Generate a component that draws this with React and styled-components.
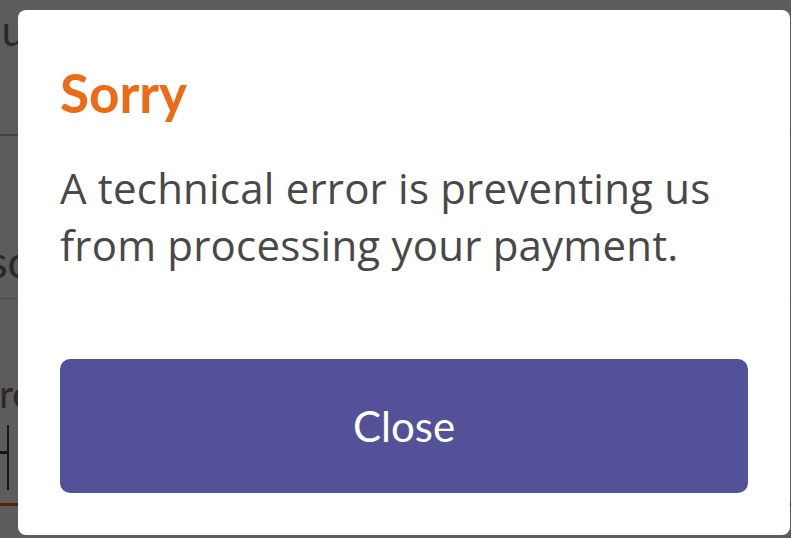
import React from "react";
import styled, { createGlobalStyle } from "styled-components";

const GlobalStyle = createGlobalStyle`
  html, body {
    margin: 0;
    padding: 0;
    overflow: hidden;
  }
  body {
    font-family: Lato, "Noto Sans", sans-serif;
  }
`;

export default function App() {
  return (
    <>
      <GlobalStyle />
      <Screen>
        <Page>
          <PageHeading>Your payment</PageHeading>
          <Rule $thick />
          <FieldText>Description</FieldText>
          <Rule />
          <FieldLabel>Reference</FieldLabel>
          <InputBox>
            <Caret />
          </InputBox>
          <InputUnderline />
        </Page>

        <Overlay />

        <Dialog role="alertdialog" aria-labelledby="dlg-title">
          <Title id="dlg-title">Sorry</Title>
          <Message>
            A technical error is preventing us
            <br />
            from processing your payment.
          </Message>
          <CloseButton type="button">Close</CloseButton>
        </Dialog>
      </Screen>
    </>
  );
}

//STYLED-COMPONENTS
const Screen = styled.div`
  position: relative;
  width: 791px;
  height: 538px;
  overflow: hidden;
  background: #ffffff;
`;

// the form page sitting behind the modal
const Page = styled.div`
  display: flex;
  flex-direction: column;
  padding-top: 6px;
  color: #737373;
`;

const PageHeading = styled.div`
  font-size: 42px;
  line-height: 48px;
  margin-left: -44px;
  white-space: nowrap;
`;

const Rule = styled.div`
  height: ${props => (props.$thick ? "2px" : "1px")};
  background: ${props => (props.$thick ? "#b8b8b8" : "#c4c4c4")};
  margin-top: ${props => (props.$thick ? "80px" : "11px")};
`;

const FieldText = styled.div`
  font-size: 44px;
  line-height: 52px;
  margin-top: 99px;
  margin-left: -68px;
  white-space: nowrap;
`;

const FieldLabel = styled.div`
  font-size: 38px;
  line-height: 46px;
  margin-top: 71px;
  margin-left: -76px;
  white-space: nowrap;
`;

const InputBox = styled.div`
  position: relative;
  height: 80px;
`;

const Caret = styled.div`
  position: absolute;
  left: 7px;
  top: 9px;
  width: 2px;
  height: 65px;
  background: #3a3a3a;

  &::before {
    content: "";
    position: absolute;
    right: 2px;
    top: 26px;
    width: 8px;
    height: 3px;
    background: #3a3a3a;
  }
`;

const InputUnderline = styled.div`
  height: 3px;
  margin-top: 7px;
  background: #ff6200;
`;

const Overlay = styled.div`
  position: absolute;
  inset: 0;
  background: rgba(0, 0, 0, 0.64);
`;

const Dialog = styled.div`
  position: absolute;
  left: 18px;
  top: 10px;
  width: 772px;
  box-sizing: border-box;
  padding: 51px 42px 42px;
  background: #ffffff;
  border-radius: 8px;
  display: flex;
  flex-direction: column;
`;

const Title = styled.h2`
  margin: 0;
  font-family: Lato, "Noto Sans", sans-serif;
  font-weight: 700;
  font-size: 53px;
  line-height: 1.2;
  color: #ee6a14;
`;

const Message = styled.p`
  margin: 34px 0 86px;
  font-family: "Open Sans", Lato, sans-serif;
  font-size: 42px;
  letter-spacing: 0.2px;
  line-height: 57px;
  color: #484848;
`;

const CloseButton = styled.button`
  height: 134px;
  width: 100%;
  border: none;
  border-radius: 10px;
  background: #535299;
  color: #ffffff;
  font-family: Lato, "Noto Sans", sans-serif;
  font-size: 42px;
  cursor: pointer;
  padding: 0;
  outline: none;
`;
